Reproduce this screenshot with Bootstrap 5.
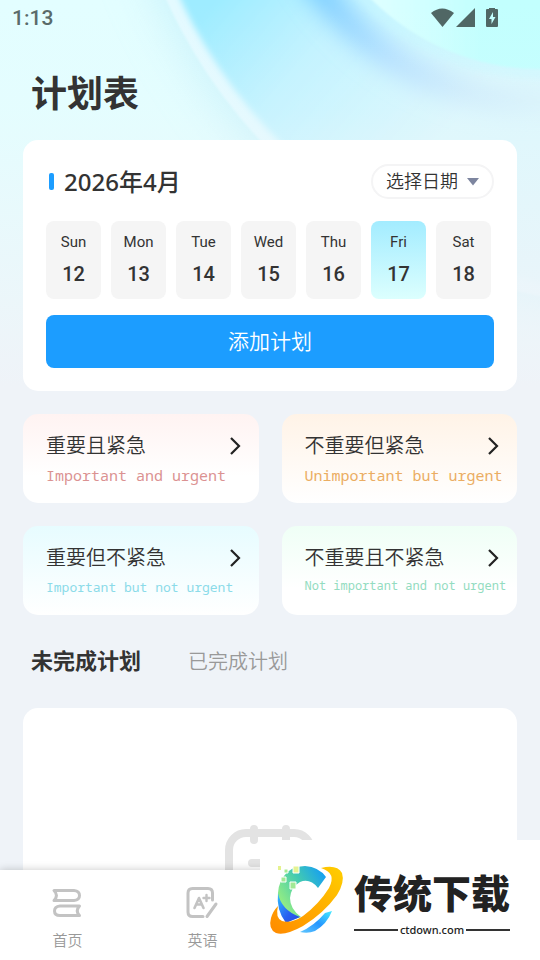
<!DOCTYPE html>
<html lang="zh-CN">
<head>
<meta charset="utf-8">
<meta name="viewport" content="width=device-width, initial-scale=1">
<title>计划表</title>
<link href="https://cdn.jsdelivr.net/npm/bootstrap@5.3.0/dist/css/bootstrap.min.css" rel="stylesheet">
<style>
  body { font-family: Roboto, "Noto Sans CJK SC", sans-serif; color: #333; background: #eff3f8; }
  .app { height: 100vh; background: #eff3f8; }
  .backdrop { position: absolute; top: 0; left: 0; width: 100%; height: 440px; }
  .status { height: 38px; padding: 0 42px 0 12px; color: #5a6b6a; font-size: 21px; font-weight: 500; }
  .scroller { min-height: 0; overflow-y: auto; padding: 0 23px; scrollbar-width: none; }
  .scroller::-webkit-scrollbar { display: none; }
  .page-title { font-size: 36px; line-height: 52px; font-weight: 700; margin: 31px 0 19px; padding-left: 8px; }
  .panel { background: #fff; border-radius: 15px; }
  .calendar { padding: 24px 23px 23px; }
  .bar { width: 5px; height: 17px; border-radius: 2px; background: #1c9dff; margin: 0 10px 0 3px; }
  .month { font-family: "Noto Sans", "Noto Sans CJK SC", sans-serif; font-size: 24px; line-height: 35px; font-weight: 500; }
  .pick { height: 35px; border: 2px solid #f4f4f5; border-radius: 18px; padding: 0 13px; font-size: 18px; line-height: 30px; gap: 9px; background: #fff; color: #333; font-weight: 350; }
  .week { gap: 10px; margin-top: 22px; padding-right: 3px; }
  .day { flex: 1 1 0; height: 78px; border: 0; border-radius: 8px; background: #f5f5f5; color: #333; padding: 9px 0 0; }
  .day small { font-size: 15px; line-height: 24px; }
  .day strong { font-size: 20px; line-height: 24px; font-weight: 500; margin-top: 8px; }
  .day.today { background: linear-gradient(#a3ecff, #dcfffe); }
  .add { height: 53px; margin-top: 16px; border: 0; border-radius: 8px; background: #1c9dff; font-size: 21px; line-height: 30px; font-weight: 350; }
  .add:hover { background: #1c9dff; }
  .quads { display: grid; grid-template-columns: repeat(2, minmax(0, 1fr)); gap: 23px; margin-top: 23px; }
  .quad { height: 89px; padding: 17px 16px 0 23px; border-radius: 15px; text-decoration: none; color: #333; white-space: nowrap; }
  .quad b { font-weight: 350; font-size: 20px; line-height: 30px; }
  .quad span { display: block; font-family: "Noto Sans Mono", "DejaVu Sans Mono", monospace; font-size: 15px; line-height: 28px; }
  .quad .mid { font-size: 13px; }
  .quad .tiny { font-size: 12px; line-height: 26px; }
  .rose { background: linear-gradient(#fff3f2, #fff 70%); } .rose span { color: #db9292; }
  .amber { background: linear-gradient(#fff3e7, #fff); } .amber span { color: #ebad62; }
  .aqua { background: linear-gradient(#e7fcff, #fff); } .aqua span { color: #8bdbe9; }
  .mint { background: linear-gradient(#effff6, #fff 70%); } .mint span { color: #93dcc0; }
  .tabs { margin-top: 31px; padding-left: 8px; gap: 47px; }
  .tabs button { border: 0; background: none; padding: 0; font-size: 20px; line-height: 32px; color: #999; font-weight: 350; }
  .tabs .current { font-size: 22px; font-weight: 700; color: #333; }
  .empty { margin-top: 30px; padding: 116px 0 80px; }
  .dock { height: 90px; background: #fff; box-shadow: 0 0 8px rgba(0,0,0,.22); }
  .dock a { text-decoration: none; color: #999; font-size: 15px; line-height: 22px; padding-top: 13px; font-weight: 350; }
  .dock svg { margin-bottom: 11px; }
  .brand { position: absolute; right: 0; bottom: 0; width: 280px; height: 120px; background: #fff; z-index: 5; padding: 20px 31px 0 7px; gap: 8px; }
  .brand-name { font-family: "Noto Sans CJK SC", sans-serif; font-size: 39px; line-height: 62px; font-weight: 900; color: #222; white-space: nowrap; }
  .brand-site { font-family: "Noto Sans", sans-serif; font-size: 11px; line-height: 16px; font-weight: 500; color: #222; gap: 2px; }
  .rule { height: 2px; background: #333; }
</style>
<script src="https://cdn.jsdelivr.net/npm/bootstrap@5.3.0/dist/js/bootstrap.bundle.min.js"></script>
</head>
<body>
<div class="app position-relative d-flex flex-column overflow-hidden">
  <svg class="backdrop" viewBox="0 0 540 440" preserveAspectRatio="none" aria-hidden="true">
    <defs>
      <linearGradient id="sea" gradientUnits="userSpaceOnUse" x1="200" y1="20" x2="400" y2="190"><stop offset="0" stop-color="#9eecff"/><stop offset=".4" stop-color="#c2f3ff"/><stop offset="1" stop-color="#dcf8fd"/></linearGradient>
      <linearGradient id="arc" gradientUnits="userSpaceOnUse" x1="310" y1="0" x2="540" y2="100"><stop offset="0" stop-color="#78ccff"/><stop offset=".4" stop-color="#b4dfff"/><stop offset=".7" stop-color="#cdebfc"/><stop offset="1" stop-color="#d8f3fb"/></linearGradient>
      <linearGradient id="lens" gradientUnits="userSpaceOnUse" x1="380" y1="0" x2="480" y2="0"><stop offset="0" stop-color="#dcffff"/><stop offset="1" stop-color="#c2fffe"/></linearGradient>
      <linearGradient id="fade" x1="0" y1="0" x2="0" y2="1"><stop offset="0" stop-color="#eff3f8" stop-opacity="0"/><stop offset=".25" stop-color="#eff3f8" stop-opacity=".1"/><stop offset=".88" stop-color="#eff3f8"/></linearGradient>
      <filter id="soft" x="-20%" y="-20%" width="140%" height="140%"><feGaussianBlur stdDeviation="11"/></filter>
      <filter id="haze" x="-30%" y="-30%" width="160%" height="160%"><feGaussianBlur stdDeviation="22"/></filter>
      <filter id="edge"><feGaussianBlur stdDeviation="3"/></filter>
      <filter id="fine"><feGaussianBlur stdDeviation="1"/></filter>
    </defs>
    <rect width="540" height="440" fill="#e3feff"/>
    <circle cx="641" cy="-215" r="532" fill="#c8f2fb" opacity=".8" filter="url(#haze)"/>
    <circle cx="641" cy="-215" r="521" fill="#e4faff" filter="url(#fine)"/>
    <circle cx="641" cy="-215" r="508" fill="url(#sea)" filter="url(#edge)"/>
    <circle cx="540" cy="-170" r="272" fill="none" stroke="url(#arc)" stroke-width="26" filter="url(#soft)"/>
    <circle cx="540" cy="-170" r="249" fill="#c8f8ff" opacity=".5" filter="url(#edge)"/>
    <circle cx="540" cy="-170" r="239" fill="url(#lens)" filter="url(#fine)"/>
    <rect width="540" height="440" fill="url(#fade)"/>
  </svg>

  <header class="status position-relative d-flex flex-shrink-0 align-items-center justify-content-between">
    <span>1:13</span>
    <svg width="67" height="22" viewBox="0 0 67 22" fill="#506765" aria-label="Wi-Fi、信号、电池">
      <path d="M0 5Q11 -4 23 5L11.500 19Z"/><path d="M25 19 44 0V19Z"/>
      <path fill-rule="evenodd" d="M55 1h3V0h6v1h2q1 0 1 1v16q0 1-1 1H56q-1 0-1-1V2q0-1 1-1ZM62 4l-4 7h2.500v5l4-7H62Z"/>
    </svg>
  </header>

  <main class="scroller position-relative flex-grow-1">
    <h1 class="page-title">计划表</h1>

    <section class="panel calendar">
      <div class="d-flex align-items-center">
        <span class="bar"></span>
        <h2 class="month mb-0 me-auto">2026年4月</h2>
        <button type="button" class="pick d-flex align-items-center">选择日期
          <svg width="12" height="8" viewBox="0 0 12 8" aria-hidden="true"><path d="M0 0H12L6 7.500Z" fill="#7d859f"/></svg>
        </button>
      </div>
      <div class="week d-flex">
        <button type="button" class="day d-flex flex-column align-items-center"><small>Sun</small><strong>12</strong></button>
        <button type="button" class="day d-flex flex-column align-items-center"><small>Mon</small><strong>13</strong></button>
        <button type="button" class="day d-flex flex-column align-items-center"><small>Tue</small><strong>14</strong></button>
        <button type="button" class="day d-flex flex-column align-items-center"><small>Wed</small><strong>15</strong></button>
        <button type="button" class="day d-flex flex-column align-items-center"><small>Thu</small><strong>16</strong></button>
        <button type="button" class="day today d-flex flex-column align-items-center" aria-pressed="true"><small>Fri</small><strong>17</strong></button>
        <button type="button" class="day d-flex flex-column align-items-center"><small>Sat</small><strong>18</strong></button>
      </div>
      <button type="button" class="add btn btn-primary w-100">添加计划</button>
    </section>

    <section class="quads">
      <a href="#" class="quad rose"><div class="d-flex align-items-center justify-content-between"><b>重要且紧急</b><svg width="14" height="20" viewBox="0 0 14 20" fill="none" stroke="#222" stroke-width="2.200"><path d="M2 2l8 8-8 8"/></svg></div><span>Important and urgent</span></a>
      <a href="#" class="quad amber"><div class="d-flex align-items-center justify-content-between"><b>不重要但紧急</b><svg width="14" height="20" viewBox="0 0 14 20" fill="none" stroke="#222" stroke-width="2.200"><path d="M2 2l8 8-8 8"/></svg></div><span>Unimportant but urgent</span></a>
      <a href="#" class="quad aqua"><div class="d-flex align-items-center justify-content-between"><b>重要但不紧急</b><svg width="14" height="20" viewBox="0 0 14 20" fill="none" stroke="#222" stroke-width="2.200"><path d="M2 2l8 8-8 8"/></svg></div><span class="mid">Important but not urgent</span></a>
      <a href="#" class="quad mint"><div class="d-flex align-items-center justify-content-between"><b>不重要且不紧急</b><svg width="14" height="20" viewBox="0 0 14 20" fill="none" stroke="#222" stroke-width="2.200"><path d="M2 2l8 8-8 8"/></svg></div><span class="tiny">Not important and not urgent</span></a>
    </section>

    <div class="tabs d-flex align-items-center">
      <button type="button" class="current">未完成计划</button>
      <button type="button">已完成计划</button>
    </div>

    <section class="panel empty text-center">
      <svg width="90" height="94" viewBox="0 0 90 94" fill="none" stroke="#e3e3e3" stroke-width="8" stroke-linecap="round" aria-hidden="true">
        <rect x="4" y="9" width="82" height="81" rx="17"/><path d="M29 5v11M61 5v11M27 39h36M27 58h36"/>
      </svg>
    </section>
  </main>

  <nav class="dock position-relative flex-shrink-0">
    <div class="row g-0">
      <a href="#" class="col-3 d-flex flex-column align-items-center">
        <svg width="34" height="36" viewBox="0 0 34 36" fill="none" stroke="#c3c3c3" stroke-width="3" stroke-linecap="round" stroke-linejoin="round" aria-hidden="true">
          <path d="M3 7.500H23Q28.500 8 28.500 12.500T23 17.500H3Q8 12.500 3 7.500Z"/><path d="M28.500 23H9Q3.500 23.500 3.500 28T9 32.500H28.500Q24 28 28.500 23Z"/>
        </svg>
        首页</a>
      <a href="#" class="col-3 d-flex flex-column align-items-center">
        <svg width="34" height="36" viewBox="0 0 34 36" fill="none" stroke="#c3c3c3" stroke-width="3" stroke-linecap="round" stroke-linejoin="round" aria-hidden="true">
          <path d="M17 33.500H6.500Q2 33.500 2 29V10Q2 5.500 6.500 5.500H22Q26.500 5.500 26.500 10V17"/><path d="M21 33.500 30 21"/><path d="M8.500 25 13 15l4.500 10M10.500 21.500h5" stroke-width="2.600"/><path d="M20.500 12v6M17.500 15h6" stroke-width="2.400"/>
        </svg>
        英语</a>
    </div>
  </nav>

  <aside class="brand d-flex">
    <svg class="flex-shrink-0" width="79" height="80" viewBox="0 0 79 80" aria-hidden="true">
      <defs>
        <linearGradient id="crescent" x1="0" y1=".7" x2="1" y2="0"><stop offset="0" stop-color="#a0f27c"/><stop offset=".5" stop-color="#43cbb0"/><stop offset="1" stop-color="#0d96ff"/></linearGradient>
        <linearGradient id="deep" x1="0" y1="0" x2="1" y2="1"><stop offset="0" stop-color="#31bfff"/><stop offset=".6" stop-color="#285ff0"/><stop offset="1" stop-color="#2449e0"/></linearGradient>
        <linearGradient id="orbit" x1="0" y1="1" x2="1" y2="0"><stop offset="0" stop-color="#ff8a00"/><stop offset="1" stop-color="#ffce00"/></linearGradient>
        <linearGradient id="tail" x1="0" y1="1" x2="1" y2="0"><stop offset="0" stop-color="#61c8ff"/><stop offset=".5" stop-color="#2697ff"/><stop offset="1" stop-color="#45eaff"/></linearGradient>
      </defs>
      <path d="M59 17Q52 7 38 6Q24 6 17 16Q10 25 11 40Q13 52 19 62L34 57Q23 49 23 38Q24 27 33 22Q43 18 51 28Z" fill="url(#crescent)"/>
      <path d="M11 33Q14 50 33 57L19 63Q9 50 11 33Z" fill="url(#deep)"/>
      <path d="M54 8Q70 4 75 13Q78 22 70 35Q57 53 36 66Q18 76 9 73Q1 69 4 58Q6 51 11 46Q8 58 15 61Q24 64 36 56Q52 44 62 28Q70 13 54 8Z" fill="url(#orbit)"/>
      <path d="M65 51Q60 64 48 71Q41 74 33 72Q47 66 58 53Z" fill="url(#tail)"/>
      <path d="M11 6h3v4h-3z" fill="#e5f28e"/>
      <g stroke="#fff"><path d="M17 9h4v4h-4z" fill="#a6eb91"/><path d="M26 6h6v7h-6z" fill="#e4f393"/><path d="M14 17h5v5h-5zM23 22h6v7h-6z" fill="#a2e995"/></g>
    </svg>
    <div class="flex-grow-1">
      <div class="brand-name">传统下载</div>
      <div class="brand-site d-flex align-items-center"><span class="rule flex-grow-1"></span>ctdown.com<span class="rule flex-grow-1"></span></div>
    </div>
  </aside>
</div>
</body>
</html>
